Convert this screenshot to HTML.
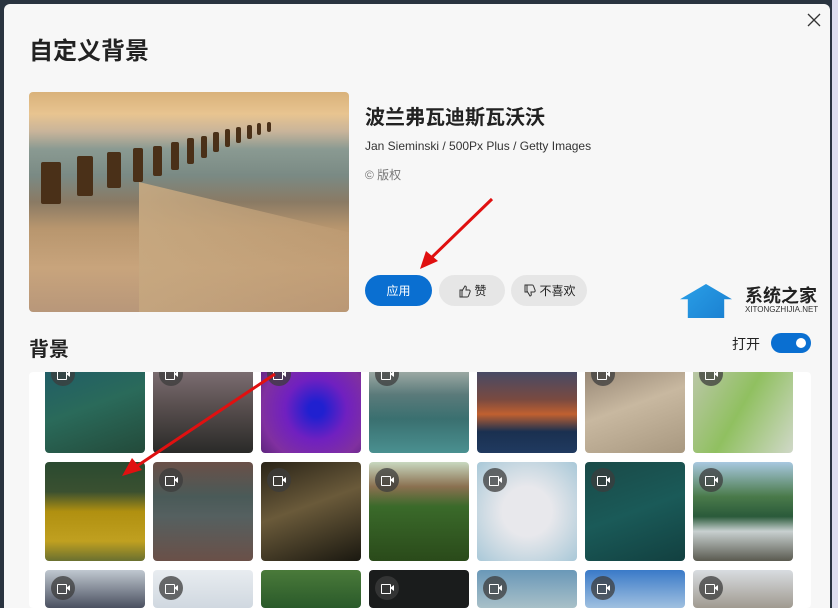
<!DOCTYPE html>
<html><head><meta charset="utf-8"><style>
*{margin:0;padding:0;box-sizing:border-box}
body{width:838px;height:608px;overflow:hidden;background:#2a3440;font-family:"Liberation Sans","Noto Sans CJK SC",sans-serif;position:relative}
.dlg{position:absolute;left:4px;top:4px;width:826px;height:604px;background:#f7f7f7;border-radius:6px 6px 0 0}
.abs{position:absolute}
.t{position:absolute;width:100px;border-radius:4px;overflow:hidden}
.cam{position:absolute;left:6px;top:6px;width:24px;height:24px;border-radius:12px;background:rgba(60,60,60,.75)}
.cam:after{content:"";position:absolute;left:6px;top:8px;width:8px;height:8px;border:1.3px solid #fff;border-radius:1px}
.cam:before{content:"";position:absolute;left:15px;top:9px;border-top:3px solid transparent;border-bottom:3px solid transparent;border-right:4px solid #fff}
.btn{position:absolute;top:275px;height:31px;border-radius:16px;font-size:12px;display:flex;align-items:center;justify-content:center;color:#222;background:#e6e6e6;gap:3px}
.post{position:absolute;background:#4a3018;border-radius:2px}
</style></head><body>
<div class="dlg"></div>
<div class="abs" style="left:832px;top:0;width:6px;height:608px;background:#dde"></div>
<svg class="abs" style="left:807px;top:13px" width="14" height="14"><path d="M1 1L13 13M13 1L1 13" stroke="#333" stroke-width="1.3"/></svg>
<div class="abs" style="left:29px;top:31px;font-size:24px;font-weight:bold;color:#222">自定义背景</div>
<div class="abs" style="left:29px;top:92px;width:320px;height:220px;border-radius:4px;overflow:hidden;background:linear-gradient(180deg,#d9b27a 0%,#e8c490 10%,#c8b49a 18%,#8a9a92 26%,#7a8a84 38%,#8a7a64 50%,#b8966e 62%,#c8a47c 80%,#b8977a 100%)">
<div style="position:absolute;left:110px;top:90px;width:250px;height:200px;background:linear-gradient(120deg,rgba(200,170,130,.9),rgba(180,140,100,.4));clip-path:polygon(0 0,100% 30%,100% 100%,0 100%)"></div>
<div class="post" style="left:12px;top:70px;width:20px;height:42px"></div>
<div class="post" style="left:48px;top:64px;width:16px;height:40px"></div>
<div class="post" style="left:78px;top:60px;width:14px;height:36px"></div>
<div class="post" style="left:104px;top:56px;width:10px;height:34px"></div>
<div class="post" style="left:124px;top:54px;width:9px;height:30px"></div>
<div class="post" style="left:142px;top:50px;width:8px;height:28px"></div>
<div class="post" style="left:158px;top:46px;width:7px;height:26px"></div>
<div class="post" style="left:172px;top:44px;width:6px;height:22px"></div>
<div class="post" style="left:184px;top:40px;width:6px;height:20px"></div>
<div class="post" style="left:196px;top:37px;width:5px;height:18px"></div>
<div class="post" style="left:207px;top:35px;width:5px;height:16px"></div>
<div class="post" style="left:218px;top:33px;width:5px;height:14px"></div>
<div class="post" style="left:228px;top:31px;width:4px;height:12px"></div>
<div class="post" style="left:238px;top:30px;width:4px;height:10px"></div>
</div>
<div class="abs" style="left:365px;top:101px;font-size:20px;font-weight:bold;color:#222">波兰弗瓦迪斯瓦沃沃</div>
<div class="abs" style="left:365px;top:139px;font-size:12px;color:#333">Jan Sieminski / 500Px Plus / Getty Images</div>
<div class="abs" style="left:365px;top:166px;font-size:12px;color:#777">© 版权</div>
<div class="btn" style="left:365px;width:67px;background:#0a6fd1;color:#fff">应用</div>
<div class="btn" style="left:439px;width:66px"><svg width="14" height="14"><path d="M3 6h2v7H3zM5 7l3-5c1 0 1.5 1 1.2 2L9 6h3c1 0 1.5 1 1 2l-1.5 4c-.2.6-.6 1-1.2 1H5" fill="none" stroke="#333" stroke-width="1"/></svg>赞</div>
<div class="btn" style="left:511px;width:76px"><svg width="14" height="14"><path d="M3 8h2V1H3zM5 7l3 5c1 0 1.5-1 1.2-2L9 8h3c1 0 1.5-1 1-2l-1.5-4c-.2-.6-.6-1-1.2-1H5" fill="none" stroke="#333" stroke-width="1"/></svg>不喜欢</div>
<svg class="abs" style="left:410px;top:195px" width="90" height="80"><line x1="82" y1="4" x2="18" y2="66" stroke="#e01010" stroke-width="3"/><polygon points="10,74 16,56 28,66" fill="#e01010"/></svg>
<div class="abs" style="left:680px;top:284px;width:52px;height:34px;background:linear-gradient(135deg,#2aa0e8,#1a7fd0);clip-path:polygon(50% 0,100% 45%,85% 45%,85% 100%,15% 100%,15% 45%,0 45%)"></div>
<div class="abs" style="left:745px;top:282px;font-size:18px;font-weight:bold;color:#222">系统之家</div>
<div class="abs" style="left:745px;top:305px;font-size:8px;color:#333">XITONGZHIJIA.NET</div>
<div class="abs" style="left:29px;top:333px;font-size:20px;font-weight:bold;color:#222">背景</div>
<div class="abs" style="left:732px;top:334px;font-size:14px;color:#222">打开</div>
<div class="abs" style="left:771px;top:333px;width:40px;height:20px;border-radius:10px;background:#0a6fd1"><div style="position:absolute;right:5px;top:5px;width:10px;height:10px;border-radius:5px;background:#fff"></div></div>
<div class="abs" style="left:29px;top:372px;width:782px;height:236px;background:#fff;border-radius:4px;overflow:hidden">
<div style="position:absolute;left:0;top:-94px;width:782px;height:330px">
<div class="t" style="left:16px;top:78px;height:97px;background:linear-gradient(160deg,#1e5a6a,#2a6a5a 50%,#234a3a)"><div class="cam"></div></div>
<div class="t" style="left:124px;top:78px;height:97px;background:linear-gradient(180deg,#8a7a80,#5a5050 50%,#2a2a28)"><div class="cam"></div></div>
<div class="t" style="left:232px;top:78px;height:97px;background:radial-gradient(circle at 55% 55%,#2020d0 10%,#7020c0 40%,#8030a0 70%,#502070)"><div class="cam"></div></div>
<div class="t" style="left:340px;top:78px;height:97px;background:linear-gradient(180deg,#c8c8c0,#5a7a7a 40%,#3a7070 65%,#4a9090)"><div class="cam"></div></div>
<div class="t" style="left:448px;top:78px;height:97px;background:linear-gradient(180deg,#2a4a7a,#7a4a40 45%,#c06030 60%,#1a3050 78%,#203a60)"></div>
<div class="t" style="left:556px;top:78px;height:97px;background:linear-gradient(160deg,#8a7a6a,#c8b8a0 50%,#a89880)"><div class="cam"></div></div>
<div class="t" style="left:664px;top:78px;height:97px;background:linear-gradient(120deg,#c0c8b0,#90c060 50%,#d0d8c8)"><div class="cam"></div></div>
</div></div>
<div class="t" style="left:45px;top:462px;height:99px;background:linear-gradient(180deg,#2a4a30 0%,#3a5030 30%,#b09010 50%,#c0a020 80%,#6a7030)"></div>
<div class="t" style="left:153px;top:462px;height:99px;background:linear-gradient(180deg,#6a5048,#4a5a58 35%,#556060 55%,#6a5048)"><div class="cam"></div></div>
<div class="t" style="left:261px;top:462px;height:99px;background:linear-gradient(160deg,#2a2418,#6a5a3a 45%,#1a1810)"><div class="cam"></div></div>
<div class="t" style="left:369px;top:462px;height:99px;background:linear-gradient(180deg,#c8d8c0,#8a7050 25%,#3a6a2a 45%,#2a4a1a)"><div class="cam"></div></div>
<div class="t" style="left:477px;top:462px;height:99px;background:radial-gradient(circle at 50% 50%,#e8e8ec 35%,#d0dce4 60%,#a8c8d8)"><div class="cam"></div></div>
<div class="t" style="left:585px;top:462px;height:99px;background:linear-gradient(160deg,#1a4a48,#1a5a58 50%,#124040)"><div class="cam"></div></div>
<div class="t" style="left:693px;top:462px;height:99px;background:linear-gradient(180deg,#a8c8e0,#4a7a4a 35%,#2a5a3a 55%,#c8d0d0 70%,#5a5a50)"><div class="cam"></div></div>
<div class="t" style="left:45px;top:570px;height:38px;background:linear-gradient(180deg,#c0c8d0,#4a5060)"><div class="cam"></div></div>
<div class="t" style="left:153px;top:570px;height:38px;background:linear-gradient(180deg,#e8ecf0,#d0d8e0)"><div class="cam"></div></div>
<div class="t" style="left:261px;top:570px;height:38px;background:linear-gradient(180deg,#4a7a3a,#2a5a2a)"></div>
<div class="t" style="left:369px;top:570px;height:38px;background:#1a1c1c"><div class="cam"></div></div>
<div class="t" style="left:477px;top:570px;height:38px;background:linear-gradient(180deg,#6a98b8,#a8c0c8)"><div class="cam"></div></div>
<div class="t" style="left:585px;top:570px;height:38px;background:linear-gradient(180deg,#3a7ac8,#a0c0e0)"><div class="cam"></div></div>
<div class="t" style="left:693px;top:570px;height:38px;background:linear-gradient(180deg,#d8dce0,#a09a90)"><div class="cam"></div></div>
<svg class="abs" style="left:110px;top:370px" width="170" height="110"><line x1="165" y1="4" x2="24" y2="98" stroke="#e01010" stroke-width="3"/><polygon points="12,106 22,88 32,100" fill="#e01010"/></svg>
</body></html>
